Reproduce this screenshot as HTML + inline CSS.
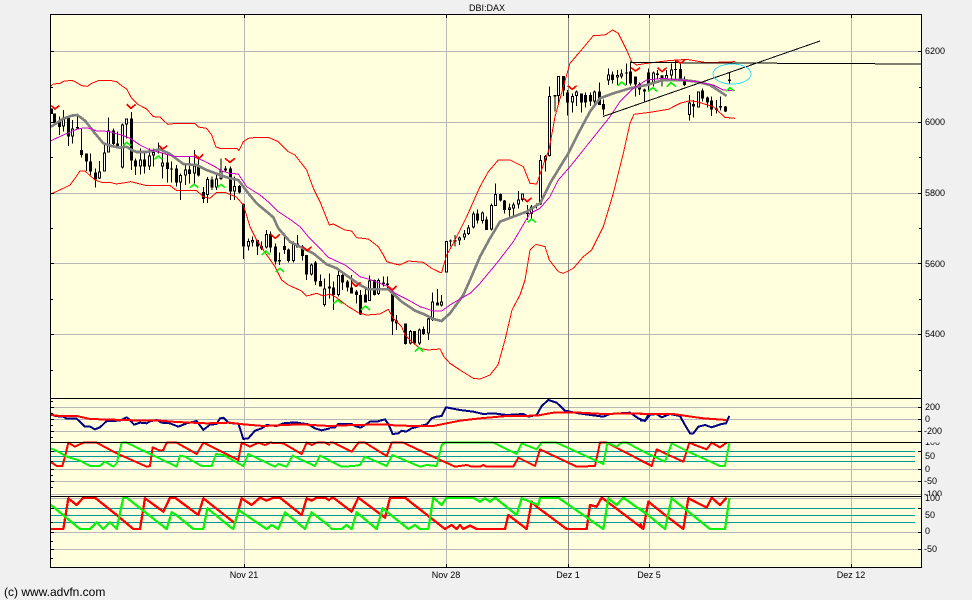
<!DOCTYPE html>
<html lang="en">
<head>
<meta charset="utf-8">
<title>DBI:DAX</title>
<style>
html,body{margin:0;padding:0;background:#f0f0f0;width:972px;height:600px;overflow:hidden}
svg{display:block}
text{font-family:"Liberation Sans",Arial,sans-serif;font-size:9px;fill:#000}
polyline,path,line,rect{shape-rendering:crispEdges}
polyline{fill:none;stroke-linejoin:round}
.k{stroke:#000;fill:none}
.w{stroke:#fff;fill:none}
</style>
</head>
<body>
<svg width="972" height="600" viewBox="0 0 972 600" xmlns="http://www.w3.org/2000/svg">
<rect x="50" y="14" width="872" height="554" fill="#ffffdd"/>

<!-- grid -->
<path stroke="#b8b8b8" fill="none" d="M51 51.5H922M51 122.5H922M51 193.5H922M51 263.5H922M51 334.5H922M51 407.5H922M51 419.5H922M51 431.5H922M51 469.5H922M51 481.5H922M51 494.5H922M51 498.5H922M51 532.5H922M51 549.5H922M244.5 14V568M446.5 14V568M649.5 14V568M851.5 14V568"/>
<path stroke="#888" fill="none" d="M568.5 14V568"/>
<path stroke="#009999" fill="none" d="M51 451.5H915M51 456.5H915M51 461.5H915M51 508.5H915M51 515.5H915M51 522.5H915"/>

<!-- main panel candles -->
<g transform="scale(.33333)">
<path class="k" stroke-width="3" d="M163 340V372M178 350V405M190 330V395M205 348V438M217 360V430M232 343V388M245 385V473M259 460V513M271 460V525M286 505V563M298 483V537M313 432V515M325 353V458M340 385V435M352 395V442M367 370V505M380 355V415M394 336V510M406 475V525M421 445V523M433 460V520M448 445V510M460 445V500M475 427V460M487 460V535M502 460V548M514 485V548M529 495V560M541 520V600M556 490V555M568 470V550M583 450V550M595 470V530M610 561V609M622 531V609M636 530V570M649 522V570M663 475V540M676 498V515M691 500V600M703 530V600M718 555V580"/>
<path class="k" stroke-width="9" d="M155 325V342M163 340V368M178 363V381M190 352V380M205 352V410M217 385V410M232 381V386M245 450V465M259 460V485M271 484V515M286 517V538M298 515V536M313 457V515M325 391V457M340 391V432M352 430V438M367 373V503M380 355V373M394 355V482M406 482V500M421 478V500M433 478V500M448 466V500M460 456V466M475 455V458M487 487V500M502 487V507M514 505V508M529 505V548M541 525V548M556 508V527M568 508V522M583 497V520M595 497V527M610 576V597M622 537V585M636 538V563M649 535V563M663 512V537M676 505V512M691 505V575M703 558V575M718 558V578"/>
<path class="w" stroke-width="3" d="M190 355V377M217 388V407M298 518V533M313 460V512M325 394V454M367 376V500M380 358V370M421 481V497M448 469V497M460 459V463M487 490V497M541 528V545M556 511V524M583 500V517M622 540V582M649 538V560M663 515V534M676 508V509M703 561V572"/>
</g>
<g transform="translate(220 130) scale(.33333)">
<path class="k" stroke-width="3" d="M71 220V387M85 325V362M98 320V350M112 330V375M125 335V360M139 300V355M152 305V368M166 340V403M179 368V405M193 315V372M206 355V397M220 335V397M233 315V352M247 345V392M260 375V450M274 400V437M287 393V465M302 433V470M314 445V530M328 430V505M341 455V540M355 415V500M368 425V480M382 450V485M395 435V490M409 480V520M422 480V555M437 470V517M449 437V513M463 448V497M476 445V495M490 440V470M503 440V480M517 475V615M530 555V600M556 580V643M571 600V643M584 603V643M598 595V645M611 590V615M625 560V630M638 487V573M652 477V527M664 495V530"/>
<path class="k" stroke-width="9" d="M71 222V350M85 333V350M98 330V337M112 330V350M125 348V355M139 312V353M152 312V353M166 350V395M179 390V395M193 348V360M206 358V393M220 340V393M233 340V352M247 350V378M260 375V433M274 403V433M287 397V455M302 453V470M314 475V525M328 470V475M341 472V495M355 435V495M368 435V458M382 455V472M395 472V490M409 485V495M422 495V553M437 493V517M449 451V513M463 450V495M476 450V492M490 458V462M503 460V465M517 492V575M530 572V580M556 580V642M571 603V640M584 603V640M598 598V640M611 597V612M625 565V610M638 515V570M652 517V527M664 515V527"/>
<path class="w" stroke-width="3" d="M85 336V347M98 333V334M139 315V350M220 343V390M274 406V430M314 478V522M355 438V492M449 454V510M476 453V489M571 606V637M598 601V637M625 568V607M638 518V567M664 518V524"/>
</g>
<g transform="translate(430 20) scale(.33333)">
<path class="k" stroke-width="3" d="M49 663V758M61 658V680M75 645V680M88 650V675M103 630V660M116 615V645M130 575V625M142 568V610M157 575V610M170 590V630M184 550V632M197 490V558M211 520V545M224 540V580M238 550V590M251 548V590M265 513V565M278 520V545M292 555V600M305 555V600M319 550V565M332 405V555M346 405V455M358 200V410M375 225V275M385 168V255M400 168V228M413 210V287M427 220V278M440 212V258M454 220V278M467 218V262M481 218V258M494 212V258M508 188V255M520 238V285M535 145V195M547 155V190M562 150V195M575 148V175M589 130V195M602 125V197M617 170V230M629 187V225M643 205V245M656 145V215M670 155V200M683 150V175M696 165V200M710 150V185M725 130V175M737 120V180M751 130V185M763 170V198M778 225V302M790 240V292M805 215V262M817 205V245M832 230V262M845 230V288M859 240V280M872 230V272M886 258V276M899 158V192"/>
<path class="k" stroke-width="9" d="M49 663V758M61 662V665M75 660V665M88 652V662M103 640V652M116 622V642M130 580V622M142 580V602M157 577V603M170 598V630M184 555V628M197 522V558M211 522V542M224 542V570M238 562V570M251 553V565M265 538V553M278 520V540M292 578V582M305 560V582M319 553V560M332 420V553M346 408V422M358 228V408M375 225V230M385 168V228M400 168V212M413 218V248M427 228V248M440 215V228M454 220V248M467 225V248M481 225V245M494 215V245M508 215V255M520 252V268M535 163V182M547 163V180M562 165V173M575 160V170M589 157V160M602 155V190M617 170V193M629 192V208M643 208V215M656 158V190M670 158V190M683 160V165M696 167V182M710 165V183M725 148V166M737 147V150M751 147V183M763 180V195M778 248V285M790 252V260M805 215V262M817 212V235M832 232V247M845 242V268M859 265V270M872 258V263M886 260V274M899 178V183"/>
<path class="w" stroke-width="3" d="M49 666V755M88 655V659M103 643V649M116 625V639M130 583V619M157 580V600M184 558V625M197 525V555M238 565V567M251 556V562M265 541V550M278 523V537M305 563V579M319 556V557M332 423V550M346 411V419M358 231V405M385 171V225M427 231V245M440 218V225M494 218V242M535 166V179M562 168V170M575 163V167M670 161V187M710 168V180M725 151V163M778 251V282M805 218V259"/>
</g>

<!-- overlays -->
<g transform="scale(.33333)" fill="none">
<polyline stroke="#808080" stroke-width="8" points="153,380 190,356 215,347 232,345 255,362 285,400 310,430 335,438 360,443 380,440 395,450 410,456 440,456 480,448 510,462 550,492 590,495 620,510 660,525 690,535 715,540 745,580 770,610 820,652 835,685 870,725 940,760 980,793 1010,805 1045,830 1080,855 1105,868 1165,868 1205,905 1245,932 1270,942 1300,957 1325,963 1350,940 1390,885 1410,840 1440,770 1470,715 1500,665 1540,650 1580,635 1620,610 1650,550 1705,460 1735,400 1770,335 1800,295 1840,280 1890,265 1940,255 1990,240 2050,240 2090,245 2130,255 2180,288"/>
<polyline stroke="#cc00cc" stroke-width="3" points="153,422 190,405 230,388 250,384 270,385 290,393 325,394 345,400 365,405 390,415 420,435 450,450 480,457 505,465 530,470 580,470 610,482 645,500 665,513 690,520 715,522 740,560 780,585 810,610 835,635 870,658 900,680 925,710 950,735 985,772 1035,795 1055,810 1080,830 1105,837 1135,848 1160,858 1185,880 1225,900 1260,920 1300,933 1325,933 1350,915 1375,900 1410,880 1440,850 1490,790 1540,725 1590,640 1620,625 1650,590 1675,540 1710,500 1750,450 1790,400 1830,350 1860,305 1900,265 1940,240 1990,235 2040,240 2090,245 2140,255 2170,270 2205,272"/>
<polyline stroke="#ff0000" stroke-width="3" points="153,258 160,252 180,250 190,244 215,241 225,245 245,257 262,259 275,250 295,242 330,241 350,245 365,257 380,267 395,295 415,314 440,327 460,350 480,351 503,373 520,371 585,370 595,381 620,385 635,405 648,441 660,445 710,445 717,452 730,425 745,415 770,412 805,412 835,425 865,455 885,465 920,510 940,565 960,605 988,675 1000,672 1035,690 1055,693 1070,713 1105,717 1135,740 1150,765 1160,785 1185,792 1200,795 1225,783 1270,787 1295,805 1320,817 1325,817 1340,765 1360,730 1380,690 1400,650 1420,605 1440,560 1465,515 1495,480 1530,480 1570,500 1590,550 1610,552 1635,480 1647,450 1665,350 1690,260 1710,190 1740,155 1780,107 1815,105 1838,90 1855,100 1880,150 1895,185 1910,195 1940,190 2005,182 2060,178 2120,188 2205,185"/>
<polyline stroke="#ff0000" stroke-width="3" points="153,582 190,565 210,555 225,535 240,513 255,513 285,540 305,547 330,547 350,552 375,548 392,545 420,552 440,557 510,557 530,572 590,572 610,590 630,595 650,577 675,577 695,585 710,592 730,615 750,680 770,720 790,750 825,800 845,840 865,855 905,873 920,888 950,880 970,888 990,882 1010,893 1045,920 1075,938 1100,945 1140,942 1165,928 1180,955 1205,980 1215,1005 1235,1025 1260,1045 1285,1050 1320,1047 1332,1070 1350,1090 1380,1110 1420,1135 1440,1137 1470,1125 1494,1095 1515,1020 1536,930 1560,885 1575,840 1590,750 1608,733 1635,740 1648,780 1675,815 1690,820 1720,805 1750,770 1775,750 1810,680 1840,580 1870,460 1890,370 1902,343 1950,337 2005,328 2040,310 2070,302 2090,305 2140,320 2175,352 2205,355"/>
</g>

<!-- trend lines and ellipse -->
<path fill="none" stroke="#000" d="M630.5 62.5V73M630.5 62.5L922 64"/>
<line x1="603" y1="116.500" x2="820" y2="41" stroke="#000"/>
<ellipse cx="732" cy="74" rx="19" ry="10" fill="none" stroke="#33ddee" stroke-width="1" shape-rendering="crispEdges"/>

<!-- markers -->
<g fill="none" stroke="#ff0000" stroke-width="5">
<g transform="scale(.33333)">
<polyline points="154,317 165,327 178,317"/><polyline points="380,313 393,325 407,313"/><polyline points="478,437 488,447 502,437"/><polyline points="583,463 596,476 610,463"/><polyline points="676,476 690,487 703,476"/>
</g>
<g transform="translate(220 130) scale(.33333)">
<polyline points="15,85 30,97 45,85"/><polyline points="152,313 166,325 180,313"/><polyline points="248,350 262,362 275,350"/><polyline points="395,457 408,469 422,457"/><polyline points="503,468 517,480 530,468"/>
</g>
<g transform="translate(430 20) scale(.33333)">
<polyline points="278,533 292,545 305,533"/><polyline points="413,197 427,208 440,197"/><polyline points="603,143 617,153 630,143"/><polyline points="683,143 696,155 710,143"/><polyline points="737,120 751,130 765,120"/>
</g>
</g>
<g fill="none" stroke="#10f010" stroke-width="5">
<g transform="scale(.33333)">
<polyline points="370,437 380,427 392,437"/><polyline points="463,478 475,468 487,478"/><polyline points="570,563 582,553 595,563"/><polyline points="652,563 663,553 675,563"/>
</g>
<g transform="translate(220 130) scale(.33333)">
<polyline points="125,375 138,363 150,375"/><polyline points="167,426 180,415 192,426"/><polyline points="340,521 353,510 367,521"/><polyline points="423,540 436,528 450,540"/><polyline points="585,665 597,653 610,665"/>
</g>
<g transform="translate(430 20) scale(.33333)">
<polyline points="293,607 305,597 318,607"/><polyline points="563,197 575,186 588,197"/><polyline points="655,214 668,203 682,214"/><polyline points="710,200 723,188 738,200"/><polyline points="888,213 900,203 913,213"/>
</g>
</g>

<!-- indicator panel 1 -->
<g fill="none" stroke-width="6">
<g transform="translate(0 390) scale(.33333)">
<polyline stroke="#000080" points="153,70 165,78 190,80 200,86 230,86 255,110 270,110 285,118 300,112 320,93 360,92 380,82 390,90 402,104 420,98 440,100 450,94 470,90 485,98 510,100 535,110 560,100 590,93 610,120 630,104 650,102 660,85 670,83 685,98 700,100 715,100 730,147 745,145 765,122 785,115 800,105 830,108 850,100 885,97 905,100 925,103 945,115 965,121 990,115"/>
<polyline stroke="#ff0000" points="153,75 180,78 230,78 270,87 370,90 430,92 480,92 530,96 620,100 690,98 730,103 790,108 900,103 990,108"/>
</g>
<g transform="translate(320 390) scale(.33333)">
<polyline stroke="#000080" points="30,113 45,112 55,102 95,102 105,108 122,113 135,105 150,95 170,95 195,88 205,102 218,132 235,130 245,122 258,125 275,115 320,103 335,85 350,80 365,78 378,52 420,60 460,65 490,72 520,70 560,75 610,72 625,80 650,75 665,48 685,30 710,38 735,62 775,70 850,80 870,72 930,68 955,85 975,93 990,75"/>
<polyline stroke="#ff0000" points="30,108 100,105 200,103 230,107 340,108 380,100 420,92 480,85 560,78 650,77 700,68 780,68 850,72 930,70 990,72"/>
</g>
<g transform="translate(640 390) scale(.33333)">
<polyline stroke="#000080" points="0,92 15,92 25,75 50,72 65,82 90,72 120,78 135,105 150,130 160,130 175,110 195,105 215,112 245,102 258,100 268,78"/>
<polyline stroke="#ff0000" points="0,72 50,72 100,72 140,78 190,85 260,90"/>
</g>

<!-- indicator panel 2 -->
<g transform="translate(0 390) scale(.33333)">
<polyline stroke="#ff0000" points="153,216 170,228 187,228 195,200 205,158 225,170 250,158 290,158 350,190 440,230 450,228 458,172 480,182 490,180 500,158 530,158 590,192 610,158 715,210 725,158 750,170 775,158 795,165 810,158 850,160 905,192 920,158 935,165 950,158 975,158 990,165"/>
<polyline stroke="#10f010" points="153,175 175,185 200,200 240,212 270,228 300,228 315,215 340,230 350,220 365,158 380,158 530,230 540,197 555,200 605,228 635,228 648,192 670,195 730,228 745,192 825,230 835,222 860,230 878,197 945,228 960,197 990,212"/>
</g>
<g transform="translate(320 390) scale(.33333)">
<polyline stroke="#ff0000" points="30,158 40,158 95,185 115,158 135,158 200,198 215,158 250,158 350,205 405,230 440,225 455,230 480,230 490,225 500,230 580,230 595,203 645,228 660,178 770,230 825,228 840,158 860,158 990,225"/>
<polyline stroke="#10f010" points="30,213 65,230 100,228 120,225 135,200 200,228 217,195 300,230 320,225 350,228 365,165 375,158 520,158 590,192 605,160 650,178 665,158 710,158 850,222 862,158 890,170 905,158 920,158 990,195"/>
</g>
<g transform="translate(640 390) scale(.33333)">
<polyline stroke="#ff0000" points="0,210 35,228 50,178 75,190 130,215 148,158 165,165 200,178 215,158 240,172 260,158"/>
<polyline stroke="#10f010" points="0,180 75,215 95,160 145,185 240,228 255,228 268,160"/>
</g>

<!-- indicator panel 3 -->
<g stroke-width="7">
<g transform="translate(0 390) scale(.33333)">
<polyline stroke="#ff0000" points="153,417 190,417 205,325 230,345 250,323 285,323 350,375 400,417 420,417 435,325 490,365 510,323 525,323 595,375 610,325 705,400 725,325 755,345 780,323 800,332 820,323 840,323 905,375 920,325 935,332 950,323 975,323 990,332"/>
<polyline stroke="#10f010" points="153,345 240,417 270,417 290,397 310,417 330,397 350,417 370,323 380,323 500,417 515,367 525,372 580,417 610,417 622,355 690,410 700,417 715,360 800,417 815,405 835,417 855,367 915,417 935,367 990,410"/>
</g>
<g transform="translate(320 390) scale(.33333)">
<polyline stroke="#ff0000" points="30,327 40,323 95,365 115,323 195,383 210,323 255,323 375,417 395,405 410,417 420,405 430,417 450,407 470,417 555,417 565,375 620,417 635,335 650,350 740,417 800,417 810,345 830,350 845,323 855,330 970,417 985,335 990,335"/>
<polyline stroke="#10f010" points="30,412 35,417 65,417 80,405 95,417 110,367 170,417 188,355 265,417 285,405 300,417 325,417 340,323 365,345 380,323 460,323 480,335 495,325 510,335 525,323 590,375 605,325 655,345 660,323 715,323 850,417 865,325 890,345 910,323 990,380"/>
</g>
<g transform="translate(640 390) scale(.33333)">
<polyline stroke="#ff0000" points="0,400 10,417 25,335 75,375 130,417 145,325 165,335 200,353 215,323 240,345 260,323"/>
<polyline stroke="#10f010" points="0,355 75,417 95,325 210,417 255,417 268,325"/>
</g>
</g>
</g>

<!-- frame -->
<path fill="none" stroke="#000" d="M50.500 14.500H921.500V567.500H50.500ZM51 398.500H922M51 442.500H922M51 496.500H922"/>
<!-- ticks -->
<path fill="none" stroke="#000" d="M51 51.500h3M51 87.500h2M51 122.500h3M51 157.500h2M51 193.500h3M51 228.500h2M51 263.500h3M51 299.500h2M51 334.500h3M51 370.500h2M51 401.500h2M51 407.500h3M51 413.500h2M51 419.500h3M51 425.500h2M51 431.500h3M51 437.500h2M51 451.500h3M51 461.500h2M51 469.500h3M51 475.500h2M51 481.500h3M51 487.500h2M51 508.500h3M51 522.500h2M51 532.500h3M51 541.500h2M51 549.500h3M51 558.500h2M918 51.500h3M919 87.500h2M918 122.500h3M919 157.500h2M918 193.500h3M919 228.500h2M918 263.500h3M919 299.500h2M918 334.500h3M919 370.500h2M918 407.500h3M918 419.500h3M918 431.500h3M918 451.500h3M918 469.500h3M918 481.500h3M918 508.500h3M918 532.500h3M918 549.500h3M244.500 15v3M446.500 15v3M568.500 15v3M649.500 15v3M851.500 15v3M244.500 564v3M446.500 564v3M568.500 564v3M649.500 564v3M851.500 564v3"/>

<!-- labels -->
<text x="487" y="11" text-anchor="middle">DBI:DAX</text>
<text x="925" y="54">6200</text>
<text x="925" y="125">6000</text>
<text x="925" y="196">5800</text>
<text x="925" y="267">5600</text>
<text x="925" y="337">5400</text>
<text x="925" y="410">200</text>
<text x="925" y="422">0</text>
<text x="924" y="434">-200</text>
<text x="925" y="445">100</text>
<rect x="923" y="436" width="30" height="6.500" fill="#f0f0f0"/>
<text x="925" y="459">50</text>
<text x="925" y="472">0</text>
<text x="924" y="484">-50</text>
<text x="924" y="497">-100</text>
<rect x="923" y="496" width="30" height="4" fill="#f0f0f0"/>
<text x="925" y="501">100</text>
<text x="925" y="518">50</text>
<text x="925" y="534">0</text>
<text x="924" y="552">-50</text>
<text x="244" y="578" text-anchor="middle">Nov 21</text>
<text x="446" y="578" text-anchor="middle">Nov 28</text>
<text x="568" y="578" text-anchor="middle">Dez 1</text>
<text x="649" y="578" text-anchor="middle">Dez 5</text>
<text x="851" y="578" text-anchor="middle">Dez 12</text>
<text x="4" y="596" style="font-size:12px">(c) www.advfn.com</text>
</svg>
</body>
</html>
